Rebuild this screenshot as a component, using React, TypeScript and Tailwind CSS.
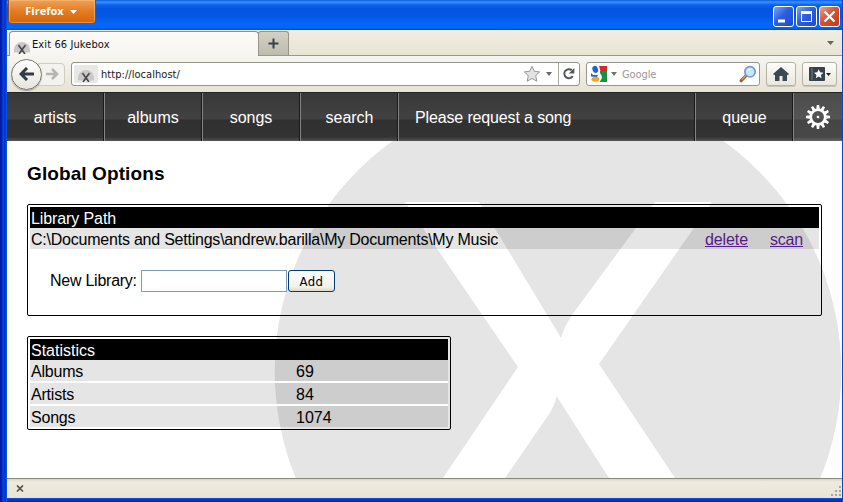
import React from "react";

const UI = "font-['DejaVu_Sans_Condensed','DejaVu_Sans',sans-serif]";

function Caret({ className = "" }: { className?: string }) {
  return (
    <svg className={`shrink-0 ${className}`} viewBox="0 0 6 4" preserveAspectRatio="none">
      <path d="M0 0h6L3 4z" fill="currentColor" />
    </svg>
  );
}

function Favicon() {
  return (
    <svg width="16" height="16" viewBox="0 0 16 16" className="shrink-0">
      <path d="M0 14.5V12a8 8 0 0 1 16 0v2.500H0z" fill="#c9c9c9" />
      <path d="M4.600 7.300l6.400 8.700M11.300 7.300L8.200 11.600 5 16" stroke="#4a4a4a" strokeWidth="1.7" fill="none" />
      <path d="M3.600 7.300h2.600M10 7.300h2.600" stroke="#6a6a6a" strokeWidth=".7" />
    </svg>
  );
}

function TitleBar() {
  return (
    <header className="flex h-[30px] shrink-0 items-start justify-between bg-[linear-gradient(180deg,#0a5be8_0px,#3a92ff_2px,#0a62ee_5px,#0355e2_9px,#0458e6_17px,#0268fc_24px,#0163f6_28px,#0049cf_30px)] pl-px pr-[2px]">
      <button
        className="flex h-[24px] w-[88px] items-center rounded-b-[4px] border border-t-0 border-[#8f4a1c] bg-[linear-gradient(180deg,#efa055,#e27c22_50%,#d76408)] pl-[16px] font-['Open_Sans',sans-serif] text-[11px] font-bold text-white shadow-[inset_0_0_0_1px_rgba(255,200,140,0.45)]"
      >
        <span className="w-[39px] whitespace-nowrap">Firefox</span>
        <Caret className="ml-[6px] h-[4px] w-[7px]" />
      </button>
      <div className="flex gap-[2px] pt-[6px]">
        <span className="size-[21px] rounded-[3px] border border-white bg-[linear-gradient(135deg,#7ca2f5,#2c5fe0_45%,#1d49cc)]">
          <svg width="19" height="19" viewBox="0 0 19 19"><path d="M4 12.500h7v3H4z" fill="#fff" /></svg>
        </span>
        <span className="size-[21px] rounded-[3px] border border-white bg-[linear-gradient(135deg,#7ca2f5,#2c5fe0_45%,#1d49cc)]">
          <svg width="19" height="19" viewBox="0 0 19 19"><path d="M4.500 5.500h10v9h-10z" stroke="#fff" fill="none" /><path d="M4 4h11v3H4z" fill="#fff" /></svg>
        </span>
        <span className="size-[21px] rounded-[3px] border border-white bg-[linear-gradient(135deg,#f0a088,#dc5230_45%,#c43a14)]">
          <svg width="19" height="19" viewBox="0 0 19 19"><path d="M4.500 4.500l10 10M14.500 4.500l-10 10" stroke="#fff" strokeWidth="2.3" /></svg>
        </span>
      </div>
    </header>
  );
}

function TabStrip() {
  return (
    <div className="flex h-[26px] shrink-0 items-end border-b border-[#9a988c] bg-[linear-gradient(180deg,#f0eee2,#e7e4d3)]">
      <div className={`${UI} -mb-px ml-[2px] flex h-[25px] w-[250px] items-center rounded-t-[4px] border border-b-0 border-[#8f8e84] bg-[linear-gradient(180deg,#fbfaf7,#f6f5f0)] pl-[4px] pt-[3px] text-[11px] text-[#111]`}>
        <Favicon />
        <span className="ml-[2px] whitespace-nowrap tracking-[0.1px]">Exit 66 Jukebox</span>
      </div>
      <div className="ml-[-1px] flex h-[24px] w-[31px] items-center justify-center rounded-t-[3px] border border-b-0 border-[#96958a] bg-[linear-gradient(180deg,#d3d1c4,#bebcae)]">
        <svg width="11" height="11" viewBox="0 0 11 11"><path d="M5.500 0.500v10M0.500 5.500h10" stroke="#38404a" strokeWidth="2" /></svg>
      </div>
      <Caret className="mb-[10px] ml-auto mr-[8px] h-[4px] w-[7px] text-[#65645e]" />
    </div>
  );
}

function Toolbar() {
  return (
    <div className="flex h-[36px] shrink-0 items-center bg-[linear-gradient(180deg,#f6f5f0,#e7e4d4)] pl-[4px] pr-[4px]">
      <div className="flex items-center">
        <div className="z-10 flex size-[31px] items-center justify-center rounded-full border border-[#77766f] bg-[linear-gradient(180deg,#ffffff,#e6e4dc)] shadow-[0_1px_1px_rgba(0,0,0,0.3)]">
          <svg width="16" height="14" viewBox="0 0 16 14"><path d="M8 1L2 7l6 6M2.500 7H15" stroke="#303c48" strokeWidth="3" fill="none" /></svg>
        </div>
        <div className="-ml-[4px] flex h-[23px] w-[27px] items-center rounded-r-[4px] border border-[#cfcdc2] bg-[#f3f2ec] pl-[7px]">
          <svg width="13" height="12" viewBox="0 0 13 12"><path d="M6 1l5 5-5 5M11 6H0" stroke="#b5b6b4" strokeWidth="2.6" fill="none" /></svg>
        </div>
      </div>
      <div className={`${UI} ml-[6px] flex h-[24px] w-[509px] items-center rounded-[3px] border border-[#96958b] bg-white text-[11px] text-[#181818]`}>
        <span className="ml-[2px] flex h-[18px] w-[24px] items-center justify-center rounded-[2px] bg-[#e9e8e4]"><Favicon /></span>
        <span className="ml-[3px] pt-[2px] tracking-[0.05px]">http://localhost/</span>
        <svg className="ml-auto" width="18" height="18" viewBox="0 0 18 18">
          <path d="M9 1.300l2.300 5 5.400.6-4 3.700 1.100 5.600L9 13.500l-4.800 2.700 1.100-5.600-4-3.700 5.400-.6z" fill="#e3e3e3" stroke="#989898" />
        </svg>
        <Caret className="ml-[5px] h-[4px] w-[6px] text-[#66666a]" />
        <div className="ml-[6px] flex h-[22px] w-[21px] items-center justify-center border-l border-[#aaa9a2]">
          <svg width="14" height="14" viewBox="0 0 14 14">
            <path d="M9.800 3.300A4.500 4.500 0 1 0 10.700 9" stroke="#52565b" strokeWidth="1.900" fill="none" />
            <path d="M12.300 1v5.500H6.800z" fill="#52565b" />
          </svg>
        </div>
      </div>
      <div className={`${UI} ml-[6px] flex h-[24px] w-[174px] items-center rounded-[3px] border border-[#96958b] bg-white text-[11px] text-[#999]`}>
        <svg className="ml-[4px]" width="16" height="16" viewBox="0 0 16 16">
          <rect width="16" height="16" fill="#f8f8f8" />
          <path d="M8 0h8v6L9.500 5z" fill="#df2425" />
          <path d="M9 5l7-.5V16H8.500c2.800-3.300 3-5.500 1.300-7.700C8.800 7 9 6 9 5z" fill="#159140" />
          <ellipse cx="4.200" cy="3.400" rx="2.700" ry="3.600" transform="rotate(-20 4.2 3.4)" fill="#1f61c8" />
          <path d="M0 7l2 2 5 0-1 2-6-.5z" fill="#1f61c8" />
          <ellipse cx="4.400" cy="13.200" rx="3.800" ry="2.500" fill="#efa51e" />
        </svg>
        <Caret className="ml-[4px] h-[4px] w-[6px] text-[#74746f]" />
        <span className="ml-[5px] pt-[2px] tracking-[-0.1px]">Google</span>
        <svg className="ml-auto mr-[2px]" width="18" height="18" viewBox="0 0 18 18">
          <path d="M7.200 10.500l-5 5.200" stroke="#995a36" strokeWidth="3.200" strokeLinecap="round" />
          <path d="M6.800 10.700l-4.200 4.200" stroke="#e0a36b" strokeWidth="1.200" />
          <circle cx="11" cy="6.800" r="5.200" fill="#c2e7fa" stroke="#709ac8" strokeWidth="1.600" />
          <path d="M7.800 6.500a3.300 3.300 0 0 1 5-2.800z" fill="#f3fcff" />
        </svg>
      </div>
      <button className="ml-[6px] flex h-[24px] w-[30px] items-center justify-center rounded-[3px] border border-[#b4b2a5] bg-[linear-gradient(180deg,#fdfdfb,#e9e7dd)] shadow-[0_1px_0_#c8c5b7]">
        <svg width="16" height="14" viewBox="0 0 16 14"><path d="M8 0l8 7-1.200 1.200L14 7.500V14H9.500V9h-3v5H2V7.500l-.8.7L0 7z" fill="#3e4851" /></svg>
      </button>
      <button className="ml-[6px] flex h-[24px] w-[35px] items-center justify-center rounded-[3px] border border-[#b4b2a5] bg-[linear-gradient(180deg,#fdfdfb,#e9e7dd)] shadow-[0_1px_0_#c8c5b7]">
        <svg width="16" height="14" viewBox="0 0 16 14">
          <rect width="16" height="14" rx="1" fill="#36414a" /><path d="M3 1v12" stroke="#75808a" />
          <path d="M9.700 2.300l1.400 3 3.300.4-2.500 2.200.7 3.300-2.900-1.700-2.900 1.700.7-3.300L5 5.700l3.300-.4z" fill="#fff" />
        </svg>
        <Caret className="ml-[1px] h-[3px] w-[5px] text-[#1d2125]" />
      </button>
    </div>
  );
}

const SEP = "border-l border-l-[#858585]";

function NavBar() {
  return (
    <nav className="flex h-[49px] shrink-0 border-t border-[#252525] bg-[linear-gradient(180deg,#383838_0px,#424242_26px,#303030_27px,#333333_44px,#555555_48px)] text-base leading-[50px] text-white">
      <div className="w-[97px] border-r border-r-[#191919] text-center">artists</div>
      <div className={`w-[98px] border-r border-r-[#191919] text-center ${SEP}`}>albums</div>
      <div className={`w-[98px] border-r border-r-[#191919] text-center ${SEP}`}>songs</div>
      <div className={`w-[98px] border-r border-r-[#191919] pl-px text-center ${SEP}`}>search</div>
      <div className={`flex-1 border-r border-r-[#191919] pl-[16px] tracking-[-0.14px] ${SEP}`}>Please request a song</div>
      <div className={`w-[98px] border-r border-r-[#191919] pl-px text-center ${SEP}`}>queue</div>
      <div className={`flex w-[49px] items-center justify-center bg-white/10 ${SEP}`}>
        <svg width="24" height="24" viewBox="0 0 24 24">
          <circle cx="12" cy="12" r="7.300" fill="none" stroke="#fff" strokeWidth="2.700" />
          {[0, 30, 60, 90, 120, 150, 180, 210, 240, 270, 300, 330].map((a) => (
            <path key={a} d="M10.300 4.500L10.800 0h2.400l.5 4.500z" fill="#fff" transform={`rotate(${a} 12 12)`} />
          ))}
          <circle cx="12" cy="12" r="1.300" fill="#fff" />
        </svg>
      </div>
    </nav>
  );
}

const stats = [
  ["Albums", "69"],
  ["Artists", "84"],
  ["Songs", "1074"],
];

function Content() {
  return (
    <main className="relative h-[337px] shrink-0 overflow-hidden bg-white px-[20px] text-base text-black">
      <svg className="absolute left-0 top-0" width="835" height="337" viewBox="7 141 835 337">
        <circle cx="558" cy="371" r="283.300" fill="#e5e5e5" />
        <path
          d="M405 202H479L561 338Q564 327 572 315L655 202H712L599 364L675 478H609L556.500 396Q555 406 547 417L505 478H443L518 367Z"
          fill="#fff"
        />
      </svg>
      <div className="relative flex flex-col">
        <h1 className="mt-[20px] h-[24px] whitespace-nowrap text-[19px] font-bold leading-[26px] tracking-[0.1px]">Global Options</h1>

        <section className="mt-[19px] h-[112px] w-[795px] rounded-[2px] border border-black p-[2px]">
          <div className="h-[21px] bg-black pl-px leading-[24px] tracking-[-0.1px] text-white">Library Path</div>
          <div className="flex h-[21px] bg-black/10 pl-px leading-[24px]">
            <span className="w-[674px] whitespace-nowrap tracking-[-0.225px]">C:\Documents and Settings\andrew.barilla\My Documents\My Music</span>
            <a className="w-[65px] tracking-[-0.1px] text-[#551a8b] underline">delete</a>
            <a className="tracking-[-0.2px] text-[#551a8b] underline">scan</a>
          </div>
          <div className="ml-[20px] mt-[20px] flex h-[24px] items-center">
            <span className="w-[91px] whitespace-nowrap tracking-[-0.25px]">New Library:</span>
            <input className="h-[22px] w-[146px] border border-[#7f9db9] bg-white" />
            <button className={`${UI} ml-px h-[22px] w-[47px] rounded-[3px] border border-[#003c74] bg-[linear-gradient(180deg,#ffffff,#f2f1ea_80%,#dcd8cc)] text-[13px] leading-[21px] tracking-[0.4px]`}>
              Add
            </button>
          </div>
        </section>

        <section className="mt-[20px] w-[424px] rounded-[2px] border border-black p-[2px]">
          <div className="h-[21px] bg-black pl-px leading-[24px] text-white">Statistics</div>
          <div className="flex flex-col">
            {stats.map(([label, value]) => (
              <div key={label} className="border-b-2 border-white last:border-b-0">
                <div className="flex h-[21px] bg-black/10 pl-px leading-[24px]">
                  <span className="w-[265px] tracking-[-0.2px]">{label}</span>
                  <span>{value}</span>
                </div>
              </div>
            ))}
          </div>
        </section>
      </div>
    </main>
  );
}

function StatusBar() {
  return (
    <footer className="flex h-[20px] shrink-0 items-center justify-between border-t border-[#89887f] bg-[linear-gradient(180deg,#d8d6ca_0px,#eeecdf_3px,#e8e5d5)] pl-[9px]">
      <svg width="8" height="7" viewBox="0 0 8 7"><path d="M1 .5l6 6M7 .5l-6 6" stroke="#55544e" strokeWidth="1.700" /></svg>
      <svg className="self-end" width="12" height="13" viewBox="0 0 12 13">
        <path d="M9 1h2v2H9zM5 5h2v2H5zM9 5h2v2H9zM1 9h2v2H1zM5 9h2v2H5zM9 9h2v2H9z" fill="#aaa798" />
      </svg>
    </footer>
  );
}

export default function App() {
  return (
    <div className="flex h-[502px] w-[843px] overflow-hidden bg-[#0645d4] font-['Liberation_Sans',Arial,sans-serif]">
      <div className="w-[7px] shrink-0 bg-[linear-gradient(90deg,#0018a0_0px,#0024b8_2px,#0b4be0_3px,#0030c8_5px,#0a5cf0_7px)]" />
      <div className="flex w-[835px] shrink-0 flex-col">
        <TitleBar />
        <TabStrip />
        <Toolbar />
        <NavBar />
        <Content />
        <StatusBar />
        <div className="h-[4px] bg-[linear-gradient(180deg,#0a50e0,#001da0)]" />
      </div>
      <div className="w-px bg-[#0645d4]" />
    </div>
  );
}
